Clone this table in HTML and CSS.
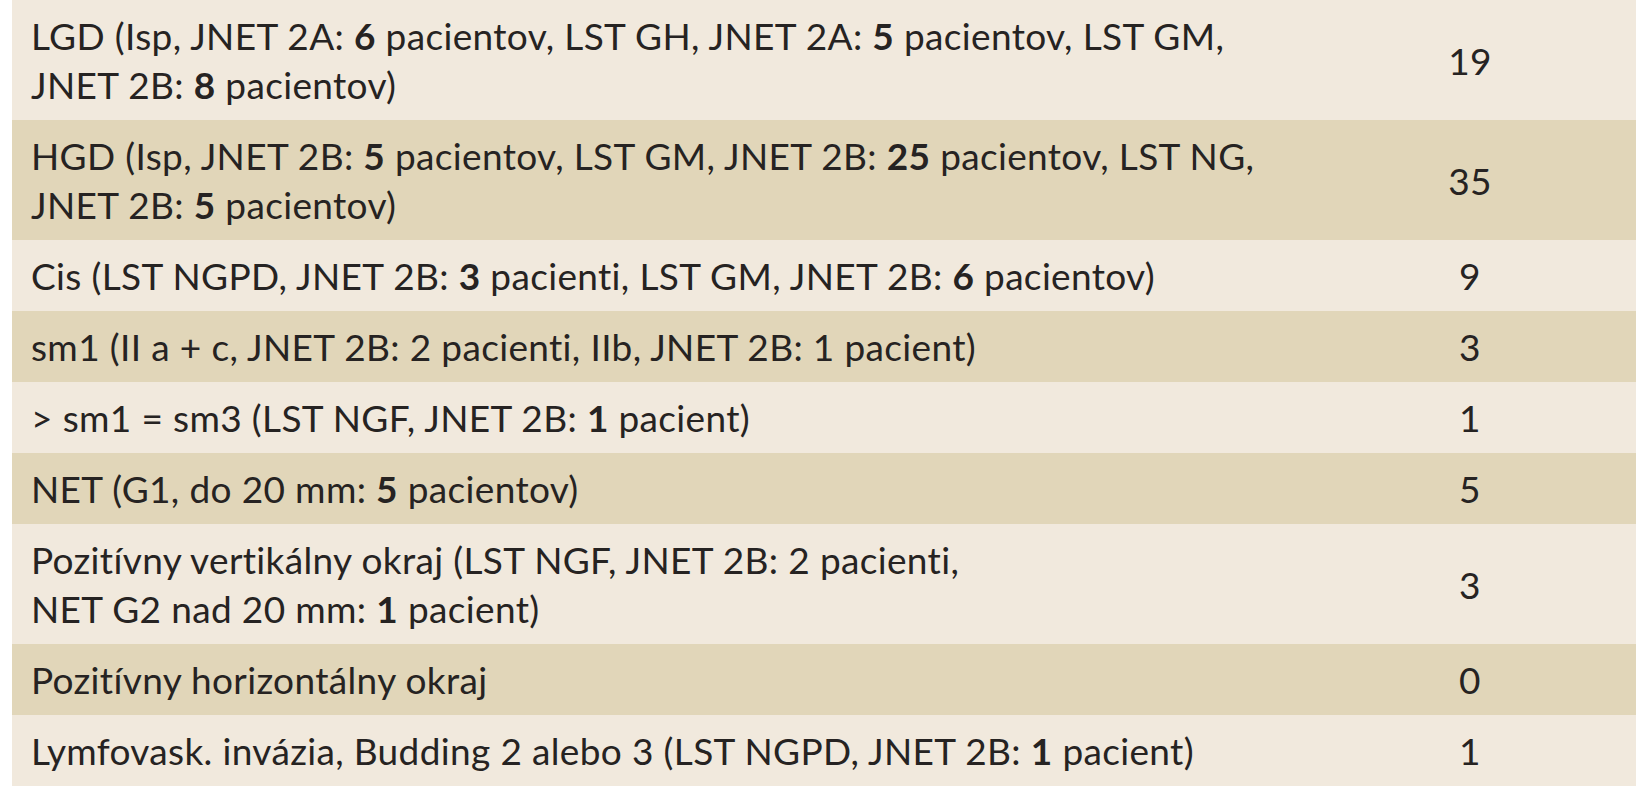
FILE: index.html
```html
<!DOCTYPE html>
<html lang="sk">
<head>
<meta charset="utf-8">
<title>Tabuľka</title>
<link rel="stylesheet" href="styles.css">
</head>
<body>
<table class="results">
  <tbody>
    <tr class="light"><td class="label">LGD (Isp, JNET 2A: <b>6</b> pacientov, LST GH, JNET 2A: <b>5</b> pacientov, LST GM,<br>JNET 2B: <b>8</b> pacientov)</td><td class="num">19</td></tr>
    <tr class="dark"><td class="label">HGD (Isp, JNET 2B: <b>5</b> pacientov, LST GM, JNET 2B: <b>25</b> pacientov, LST NG,<br>JNET 2B: <b>5</b> pacientov)</td><td class="num">35</td></tr>
    <tr class="light"><td class="label">Cis (LST NGPD, JNET 2B: <b>3</b> pacienti, LST GM, JNET 2B: <b>6</b> pacientov)</td><td class="num">9</td></tr>
    <tr class="dark"><td class="label">sm1 (II a + c, JNET 2B: 2 pacienti, IIb, JNET 2B: 1 pacient)</td><td class="num">3</td></tr>
    <tr class="light"><td class="label">&gt; sm1 = sm3 (LST NGF, JNET 2B: <b>1</b> pacient)</td><td class="num">1</td></tr>
    <tr class="dark"><td class="label">NET (G1, do 20 mm: <b>5</b> pacientov)</td><td class="num">5</td></tr>
    <tr class="light"><td class="label">Pozitívny vertikálny okraj (LST NGF, JNET 2B: 2 pacienti,<br>NET G2 nad 20 mm: <b>1</b> pacient)</td><td class="num">3</td></tr>
    <tr class="dark"><td class="label">Pozitívny horizontálny okraj</td><td class="num">0</td></tr>
    <tr class="light"><td class="label">Lymfovask. invázia, Budding 2 alebo 3 (LST NGPD, JNET 2B: <b>1</b> pacient)</td><td class="num">1</td></tr>
  </tbody>
</table>
</body>
</html>
```
FILE: styles.css
```css
html, body {
  margin: 0;
  padding: 0;
  background: #ffffff;
}
body {
  font-family: "Lato", "Liberation Sans", sans-serif;
  color: #262322;
}
.results {
  margin-left: 12px;
  width: 1624px;
  border-collapse: collapse;
  border-spacing: 0;
}
.results td {
  padding: 11px 0;
  font-size: 37px;
  line-height: 49px;
  letter-spacing: 0.35px;
  font-variant-ligatures: none;
  vertical-align: middle;
}
.results .label {
  padding-left: 19px;
  width: 1273px;
}
.results .num {
  text-align: center;
  width: 332px;
}
.results b {
  font-weight: 700;
}
.light {
  background: #f1e9dd;
}
.dark {
  background: #e1d6b9;
}
```
